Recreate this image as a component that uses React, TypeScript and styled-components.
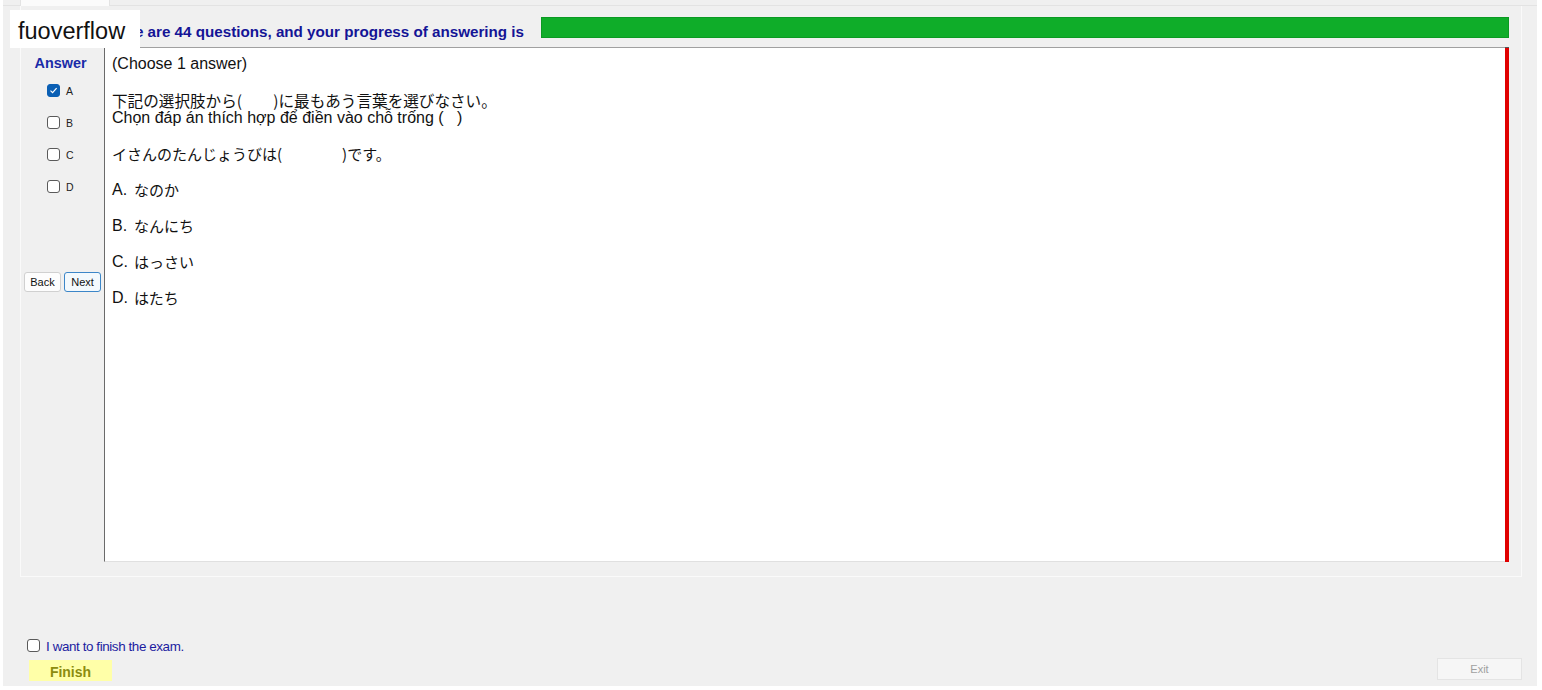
import React from 'react';
import styled, { createGlobalStyle } from 'styled-components';

const GlobalStyle = createGlobalStyle`
  html, body {
    margin: 0;
    padding: 0;
    background: #ffffff;
  }
  body {
    font-family: "Liberation Sans", Arial, sans-serif;
  }
`;

// styles
const Window = styled.div`
  margin-left: 3px;
  width: 1534px;
  height: 686px;
  background: #f0f0f0;
  display: flex;
  flex-direction: column;
  position: relative;
`;

const TabStrip = styled.div`
  height: 6px;
  display: flex;
  padding-left: 17px;
  border-bottom: 1px solid #e3e3e3;
  box-sizing: border-box;
`;

const Tab = styled.div`
  width: 90px;
  height: 6px;
  background: #fbfbfb;
  border-left: 1px solid #e3e3e3;
  border-right: 1px solid #e3e3e3;
  box-sizing: border-box;
`;

const Panel = styled.div`
  margin: 0 15px 0 17px;
  height: 571px;
  border: 1px solid #fafafa;
  border-top: none;
  box-sizing: border-box;
  display: flex;
  flex-direction: column;
  padding: 11px 12px 14px 3px;
`;

const HeaderRow = styled.div`
  display: flex;
  align-items: flex-start;
  height: 22px;
  padding-left: 78px;
`;

const HeaderText = styled.div`
  font-weight: bold;
  font-size: 15.2px;
  line-height: 18px;
  padding-top: 6px;
  color: #141496;
  white-space: nowrap;
  width: 439px;
`;

const Progress = styled.div`
  flex: 1;
  height: 21px;
  background: #0fad29;
  border: 1px solid #0b9a22;
  box-sizing: border-box;
`;

const BodyRow = styled.div`
  display: flex;
  margin-top: 8px;
  flex: 1;
`;

const AnswerCol = styled.div`
  width: 80px;
  display: flex;
  flex-direction: column;
`;

const AnswerTitle = styled.div`
  font-weight: bold;
  font-size: 14.4px;
  color: #1a2ba8;
  text-align: center;
  margin-top: 8px;
  margin-right: 7px;
`;

const Options = styled.div`
  display: flex;
  flex-direction: column;
  gap: 19px;
  margin-top: 13px;
  padding-left: 23px;
`;

const OptionRow = styled.label`
  display: flex;
  align-items: center;
  gap: 6px;
  height: 13px;
  font-size: 10.5px;
  color: #222;
`;

const Box = styled.span<{ $checked?: boolean }>`
  width: 13px;
  height: 13px;
  border-radius: 3px;
  box-sizing: border-box;
  border: 1px solid ${(p) => (p.$checked ? '#0a5fb4' : '#5a5a5a')};
  background: ${(p) => (p.$checked ? '#0a5fb4' : '#fff')};
  display: flex;
  align-items: center;
  justify-content: center;
  flex-shrink: 0;
`;

const NavRow = styled.div`
  display: flex;
  gap: 3px;
  margin-top: 79px;
`;

const NavButton = styled.button<{ $focus?: boolean }>`
  height: 20px;
  width: 37px;
  padding: 0;
  font-family: "Liberation Sans", Arial, sans-serif;
  font-size: 11px;
  color: #111;
  background: ${(p) => (p.$focus ? '#f3f9fd' : '#fdfdfd')};
  border: 1px solid ${(p) => (p.$focus ? '#3c86c8' : '#d0d0d0')};
  border-radius: 3px;
`;

const ContentBox = styled.div`
  flex: 1;
  background: #ffffff;
  border-left: 1px solid #6a6a6a;
  border-top: 1px solid #a0a0a0;
  border-bottom: 1px solid #e0e0e0;
  padding: 7px 7px;
  font-size: 16px;
  color: #111;
  font-family: "Liberation Sans", "Noto Sans CJK JP", sans-serif;
  line-height: 18px;
`;

const Para = styled.div<{ $gap?: number }>`
  margin-top: ${(p) => p.$gap ?? 0}px;
  height: 18px;
  white-space: pre;
  display: flex;
  align-items: center;
`;

const Jp = styled.span<{ $size?: number }>`
  font-family: "Noto Sans CJK JP", sans-serif;
  font-size: ${(p) => p.$size ?? 15}px;
  line-height: 18px;
`;

const Marker = styled.span`
  width: 22px;
`;

const RedBar = styled.div`
  width: 4px;
  background: #e00000;
  border-top: 1px solid #555;
`;

const Footer = styled.div`
  flex: 1;
  display: flex;
  flex-direction: column;
  justify-content: flex-end;
  padding: 0 15px 5px 24px;
`;

const FinishCheck = styled.label`
  display: flex;
  align-items: center;
  gap: 6px;
  font-size: 13.4px;
  line-height: 16px;
  color: #1c1ca0;
  letter-spacing: -0.4px;
`;

const FinishText = styled.span`
  padding-top: 4px;
`;

const ButtonRow = styled.div`
  display: flex;
  justify-content: space-between;
  align-items: flex-end;
  margin-top: 3px;
`;

const FinishButton = styled.div`
  margin-left: 2px;
  width: 83px;
  height: 21px;
  padding-top: 2px;
  box-sizing: border-box;
  background: #ffffa8;
  color: #8c8c10;
  font-weight: bold;
  font-size: 14px;
  display: flex;
  align-items: center;
  justify-content: center;
`;

const ExitButton = styled.div`
  width: 85px;
  height: 22px;
  background: #f6f6f6;
  border: 1px solid #e4e4e4;
  box-sizing: border-box;
  color: #a0a0a0;
  font-size: 11px;
  display: flex;
  align-items: center;
  justify-content: center;
  margin-bottom: 1px;
`;

const Watermark = styled.div`
  position: absolute;
  left: 7px;
  top: 10px;
  width: 130px;
  height: 38px;
  padding: 5px 0 0 8px;
  box-sizing: border-box;
  background: #ffffff;
  font-family: "Liberation Sans", Arial, sans-serif;
  font-size: 23.5px;
  color: #111;
  display: flex;
  align-items: center;
`;

function Check({ checked }: { checked?: boolean }) {
  return (
    <Box $checked={checked}>
      {checked && (
        <svg width="9" height="9" viewBox="0 0 9 9">
          <path d="M1.5 4.6 L3.6 6.6 L7.6 2.2" stroke="#fff" strokeWidth="1.2" fill="none" />
        </svg>
      )}
    </Box>
  );
}

export default function App() {
  const options = ['A', 'B', 'C', 'D'];
  const choices = [
    ['A.', 'なのか'],
    ['B.', 'なんにち'],
    ['C.', 'はっさい'],
    ['D.', 'はたち'],
  ];
  return (
    <>
      <GlobalStyle />
      <Window>
        <TabStrip>
          <Tab />
        </TabStrip>
        <Panel>
          <HeaderRow>
            <HeaderText>There are 44 questions, and your progress of answering is</HeaderText>
            <Progress />
          </HeaderRow>
          <BodyRow>
            <AnswerCol>
              <AnswerTitle>Answer</AnswerTitle>
              <Options>
                {options.map((o, i) => (
                  <OptionRow key={o}>
                    <Check checked={i === 0} />
                    {o}
                  </OptionRow>
                ))}
              </Options>
              <NavRow>
                <NavButton>Back</NavButton>
                <NavButton $focus>Next</NavButton>
              </NavRow>
            </AnswerCol>
            <ContentBox>
              <Para>(Choose 1 answer)</Para>
              <Para $gap={18}>
                <Jp $size={15.6}>下記の選択肢から(　　)に最もあう言葉を選びなさい。</Jp>
              </Para>
              <Para>Chọn đáp án thích hợp để điền vào chỗ trống (   )</Para>
              <Para $gap={18}>
                <Jp $size={15}>イさんのたんじょうびは(　　　　)です。</Jp>
              </Para>
              {choices.map(([m, t]) => (
                <Para key={m} $gap={18}>
                  <Marker>{m}</Marker>
                  <Jp>{t}</Jp>
                </Para>
              ))}
            </ContentBox>
            <RedBar />
          </BodyRow>
        </Panel>
        <Footer>
          <FinishCheck>
            <Check />
            <FinishText>I want to finish the exam.</FinishText>
          </FinishCheck>
          <ButtonRow>
            <FinishButton>Finish</FinishButton>
            <ExitButton>Exit</ExitButton>
          </ButtonRow>
        </Footer>
        <Watermark>fuoverflow</Watermark>
      </Window>
    </>
  );
}
